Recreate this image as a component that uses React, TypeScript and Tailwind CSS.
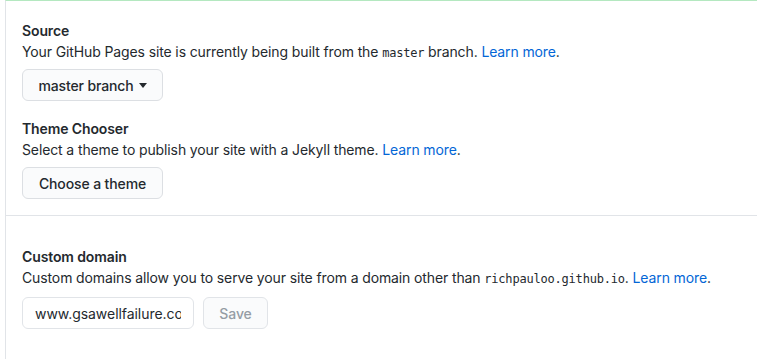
import React from 'react';

const font = { fontFamily: 'Inter, "Noto Sans", "Liberation Sans", sans-serif' };

const LearnMore: React.FC = () => (
  <>
    {' '}
    <a href="#" className="text-[#0366d6] no-underline">Learn more</a>.
  </>
);

const Mono: React.FC<{ children: React.ReactNode }> = ({ children }) => (
  <code className="text-[12px] leading-[0] font-['DejaVu_Sans_Mono',monospace] tracking-[-0.2px]">{children}</code>
);

export default function App() {
  return (
    <div
      className="w-[757px] h-[359px] bg-white overflow-hidden text-[#24292e] text-[14px] leading-[21px] tracking-[-0.12px]"
      style={font}
    >
      <div className="ml-[5px] h-full border-l border-t border-l-[#e1e4e8] border-t-[#b4e8c0]">
        {/* Pages source */}
        <div className="pl-[16px] pt-[19px] pb-[16px] border-b border-[#e1e4e8]">
          <h3 className="font-semibold text-[14px] leading-[21px]">Source</h3>
          <p className="h-[21px]">
            Your GitHub Pages site is currently being built from the <Mono>master</Mono> branch.
            <LearnMore />
          </p>
          <button
            type="button"
            className="mt-[7px] w-[141px] h-[32px] flex items-center justify-center gap-[5px] bg-[#fafbfc] border border-[#dcdfe3] rounded-[6px] text-[14px] font-medium"
          >
            master branch
            <svg width="8" height="5" viewBox="0 0 8 5" className="mt-[1px]">
              <path d="M0 0h8L4 5z" fill="#24292e" />
            </svg>
          </button>

          <h3 className="mt-[17px] font-semibold text-[14px] leading-[21px]">Theme Chooser</h3>
          <p className="h-[21px]">
            Select a theme to publish your site with a Jekyll theme.
            <LearnMore />
          </p>
          <button
            type="button"
            className="mt-[7px] w-[141px] h-[32px] flex items-center justify-center bg-[#fafbfc] border border-[#dcdfe3] rounded-[6px] text-[14px] font-medium"
          >
            Choose a theme
          </button>
        </div>

        {/* Custom domain */}
        <div className="pl-[16px] pt-[30px]">
          <h3 className="font-semibold text-[14px] leading-[21px]">Custom domain</h3>
          <p className="h-[21px]">
            Custom domains allow you to serve your site from a domain other than <Mono>richpauloo.github.io</Mono>.
            <LearnMore />
          </p>
          <div className="mt-[9px] flex items-center gap-[9px]">
            <input
              type="text"
              readOnly
              value="www.gsawellfailure.com"
              className="w-[172px] h-[32px] px-[12px] border border-[#e1e4e8] rounded-[6px] text-[14px] text-[#24292e] tracking-[-0.05px] outline-none"
              style={font}
            />
            <button
              type="button"
              disabled
              className="w-[65px] h-[32px] bg-[#fafbfc] border border-[#e1e4e8] rounded-[6px] text-[14px] font-medium text-[#959da5]"
            >
              Save
            </button>
          </div>
        </div>
      </div>
    </div>
  );
}
